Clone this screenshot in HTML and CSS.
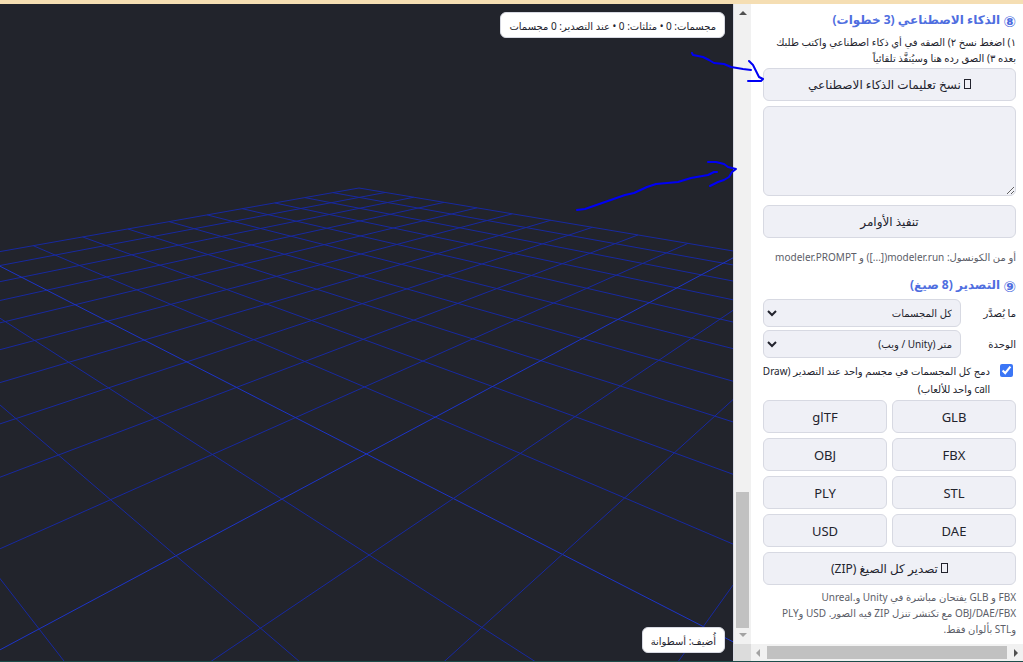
FILE: index.html
```
<!DOCTYPE html>
<html lang="ar" dir="rtl">
<head>
<meta charset="utf-8">
<title>Modeler</title>
<link rel="stylesheet" href="styles.css">
</head>
<body>
<div class="app">
  <aside class="side">
    <div class="panel">
      <section>
        <h2><span class="num">⑧</span> الذكاء الاصطناعي (3 خطوات)</h2>
        <label class="steps" for="reply">١) اضغط نسخ ٢) الصقه في أي ذكاء اصطناعي واكتب طلبك<br>بعده ٣) الصق رده هنا وسيُنفَّذ تلقائياً</label>
        <button class="btn" type="button"><span class="glyph"></span> نسخ تعليمات الذكاء الاصطناعي</button>
        <textarea id="reply" class="reply"></textarea>
        <button class="btn" type="button">تنفيذ الأوامر</button>
        <p class="note console">أو من الكونسول: modeler.run([...]) و modeler.PROMPT</p>
      </section>
      <section>
        <h2><span class="num">⑨</span> التصدير (8 صيغ)</h2>
        <div class="row"><label for="what">ما يُصدَّر</label>
          <div class="pick"><select id="what"><option>كل المجسمات</option></select><svg viewBox="0 0 10 7"><path d="M1 1l4 4 4-4"/></svg></div></div>
        <div class="row"><label for="unit">الوحدة</label>
          <div class="pick"><select id="unit"><option>متر (Unity / ويب)</option></select><svg viewBox="0 0 10 7"><path d="M1 1l4 4 4-4"/></svg></div></div>
        <label class="check"><input type="checkbox" checked><span>دمج كل المجسمات في مجسم واحد عند التصدير (Draw<br>call واحد للألعاب)</span></label>
        <div class="formats">
          <button class="btn" type="button">GLB</button><button class="btn" type="button">glTF</button>
          <button class="btn" type="button">FBX</button><button class="btn" type="button">OBJ</button>
          <button class="btn" type="button">STL</button><button class="btn" type="button">PLY</button>
          <button class="btn" type="button">DAE</button><button class="btn" type="button">USD</button>
          <button class="btn wide" type="button"><span class="glyph"></span> تصدير كل الصيغ (ZIP)</button>
        </div>
        <p class="note">FBX و GLB يفتحان مباشرة في Unity و.Unreal<br>OBJ/DAE/FBX مع تكتشر تنزل ZIP فيه الصور. USD وPLY<br>وSTL بألوان فقط.</p>
      </section>
    </div>
    <div class="vbar"><i class="up"></i><i class="vthumb"></i><i class="down"></i></div>
    <div class="hbar"><i class="right"></i><i class="hthumb"></i><i class="left"></i></div>
    <div class="corner"></div>
  </aside>
  <main class="view">
    <svg class="grid" viewBox="0 0 733 657" preserveAspectRatio="xMaxYMin slice"></svg>
    <div class="chip stats">مجسمات: 0 • مثلثات: 0 • عند التصدير: 0 مجسمات</div>
    <div class="chip toast">أُضيف: أسطوانة</div>
  </main>
</div>
<svg class="ink" width="200" height="180" viewBox="570 40 200 180">
  <path d="M692 53l1 2 10 2 6 3 5 3 10 1 7 3 12 2 8 1M749 61l4 4 4 8 2 4 4 2-2 2-13 0"/>
  <path d="M577 210l8-1 40-14 9-2 13-6 9-3 22-2 13-4 17-3 6-3 3 0M708 162l8 0 8 2 4 3 8 2-4 3-3 5-5 3-6 2-8 4"/>
</svg>
<script src="grid.js"></script>
</body>
</html>
```
FILE: styles.css
```
* { box-sizing: border-box; }
body {
  margin: 0;
  color: #22232d;
  font: 10px/16px "Noto Sans", "DejaVu Sans", sans-serif;
}
.app {
  display: flex;
  height: 100vh;
  border-top: 4px solid #f5deb3;
  border-bottom: 1px solid #1d4d4b;
}
.side {
  display: grid;
  grid-template: minmax(0, 1fr) 17px / minmax(0, 1fr) 18px;
  width: 290px;
  flex: none;
  background: #fff;
}
.panel { padding: 6px 7px 0 12px; overflow: hidden; }
h2 { margin: 0; font-size: 12px; line-height: 20px; color: #4f6ee0; white-space: nowrap; }
.num { font-size: 15px; line-height: 16px; vertical-align: middle; }
.steps { display: block; margin: 4px 0 2px; white-space: nowrap; }
button, select, textarea { font: inherit; color: inherit; }
.btn {
  display: block;
  width: 100%;
  height: 33px;
  padding: 0;
  border: 1px solid #d7d9e2;
  border-radius: 6px;
  background: #eff0f6;
  font-size: 12px;
}
.glyph {
  display: inline-block;
  width: 7px;
  height: 10px;
  border: 1px solid #22232d;
}
.reply {
  display: block;
  width: 100%;
  height: 90px;
  margin: 5px 0 9px;
  border: 1px solid #d7d9e2;
  border-radius: 6px;
  background: #eff0f6;
  direction: ltr;
}
.note { margin: 4px 0 0; color: #5c5e68; white-space: nowrap; }
.console { margin: 11px 0 10px; }
.row { display: flex; align-items: center; justify-content: space-between; margin-top: 3px; }
h2 + .row { margin-top: 4px; }
.pick { position: relative; width: 198px; }
.pick select {
  display: block;
  width: 100%;
  height: 28px;
  padding: 0 8px;
  border: 1px solid #d7d9e2;
  border-radius: 6px;
  background: #eff0f6;
  appearance: none;
}
.pick svg {
  position: absolute;
  left: 4px;
  top: 11px;
  width: 10px;
  height: 7px;
  fill: none;
  stroke: #22232d;
  stroke-width: 2;
}
.check { display: flex; gap: 10px; margin: 4px 0 2px; line-height: 18px; white-space: nowrap; }
.check input { width: 13px; height: 13px; margin: 2px 3px 0 0; flex: none; accent-color: #3b76f6; }
.formats { display: grid; grid-template-columns: 1fr 1fr; gap: 5px; }
.formats .btn { font-size: 13px; }
.formats .wide { grid-column: span 2; font-size: 12px; }
.vbar {
  display: flex;
  flex-direction: column;
  align-items: center;
  background: #f1f1f1;
  border-left: 1px solid #d7d9e2;
  padding: 7px 0;
}
.up, .down { border: 4px solid transparent; border-top: 0; border-bottom-color: #505050; }
.down { border-top: 4px solid #a3a3a3; border-bottom: 0; }
.vthumb { width: 13px; height: 136px; margin: auto 0 5px; background: #c1c1c1; }
.hbar { display: flex; align-items: center; background: #f1f1f1; padding: 0 5px; gap: 7px; }
.right, .left { border: 4px solid transparent; border-right: 0; border-left-color: #505050; }
.left { border-right: 4px solid #a3a3a3; border-left: 0; }
.hthumb { flex: 1; height: 13px; background: #c1c1c1; }
.corner { background: #dcdcdc; border-left: 1px solid #d7d9e2; }
.view { position: relative; flex: 1; min-width: 0; background: #22242c; overflow: hidden; }
.grid { display: block; width: 100%; height: 100%; stroke: #1829a0; }
.grid .axis { stroke: #1d34c8; }
.chip {
  position: absolute;
  right: 8px;
  height: 26px;
  padding: 0 8px;
  border: 1px solid #d7d9e2;
  border-radius: 6px;
  background: #fff;
  line-height: 26px;
  white-space: nowrap;
}
.stats { top: 8px; }
.toast { bottom: 8px; }
.ink {
  position: absolute;
  top: 40px;
  right: 253px;
  fill: none;
  stroke: #0000f5;
  stroke-width: 2;
  stroke-linecap: round;
  stroke-linejoin: round;
  pointer-events: none;
}
```
FILE: grid.js
```
// Floor grid of 20 x 20 cells in perspective, starting from its far corner.
const svg = document.querySelector('.grid');
function project(i, j) {
  const w = 1 - 0.0335 * (i + j);
  return [(359 + 13.5 * i - 37.31 * j) / w, (188 - 2 * i - 1.82 * j) / w - 4];
}
function line(a, b, axis) {
  const el = document.createElementNS('http://www.w3.org/2000/svg', 'line');
  el.setAttribute('x1', a[0]);
  el.setAttribute('y1', a[1]);
  el.setAttribute('x2', b[0]);
  el.setAttribute('y2', b[1]);
  if (axis) el.setAttribute('class', 'axis');
  svg.append(el);
}
for (let k = 0; k <= 20; k++) {
  const end = Math.min(20, 29 - k);
  line(project(k, 0), project(k, end), k === 10);
  line(project(0, k), project(end, k), k === 10);
}
```
